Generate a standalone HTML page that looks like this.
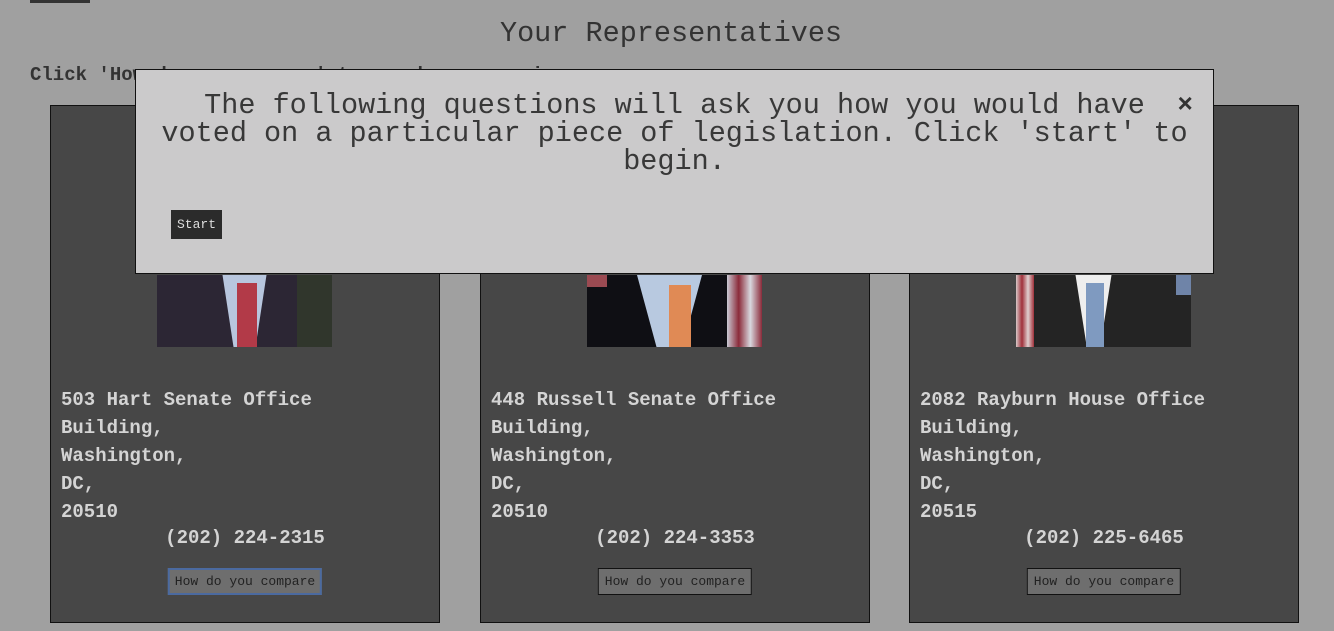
<!DOCTYPE html>
<html><head><style>
body{margin:0;width:1334px;height:631px;background:#a0a0a0;font-family:"Liberation Mono",monospace;position:relative;overflow:hidden;color:#333}
.abs{position:absolute}
.card{position:absolute;top:105px;width:388px;height:516px;background:#474747;border:1px solid #111}
.photo{position:absolute;top:169px;left:106px;width:175px;height:72px;overflow:hidden}
.addr{position:absolute;left:10px;top:280px;font-weight:bold;font-size:19px;line-height:28px;color:#d4d4d4}
.phone{position:absolute;left:0;width:100%;top:421px;text-align:center;font-weight:bold;font-size:19px;color:#d4d4d4}
.btn{position:absolute;top:462px;left:50%;transform:translateX(-50%);font-size:13px;padding:5px 6px;background:#6e6e6e;border:1px solid #111;color:#222;white-space:nowrap}
</style></head><body>
<div class="abs" style="left:30px;top:0;width:60px;height:3px;background:#333"></div>
<div class="abs" style="left:4px;width:1334px;top:17px;text-align:center;font-size:28.5px;color:#333">Your Representatives</div>
<div class="abs" style="left:30px;top:64px;font-size:19px;font-weight:bold;color:#333">Click 'How do you compare' to see how your views compare.</div>

<div class="card" style="left:50px">
<div class="photo" style="background:#2a2a2a">
<div class="abs" style="left:0;top:0;width:175px;height:72px;background:#2c2634"></div>
<div class="abs" style="left:60px;top:0;width:55px;height:72px;background:#b8c6de;clip-path:polygon(10% 0,90% 0,70% 100%,30% 100%)"></div>
<div class="abs" style="left:80px;top:8px;width:20px;height:64px;background:#b23a48"></div>
<div class="abs" style="left:140px;top:0;width:35px;height:72px;background:#30362c"></div>
</div>
<div class="addr">503 Hart Senate Office<br>Building,<br>Washington,<br>DC,<br>20510</div>
<div class="phone">(202) 224-2315</div>
<div class="btn" style="border:2px solid #4b6aa0;padding:4px 5px">How do you compare</div>
</div>

<div class="card" style="left:480px">
<div class="photo" style="background:#0f0f14">
<div class="abs" style="left:0;top:0;width:20px;height:12px;background:#9b4a52"></div>
<div class="abs" style="left:140px;top:0;width:35px;height:72px;background:linear-gradient(90deg,#c9c9d4,#8b2b3a,#d8d8df,#8b2b3a)"></div>
<div class="abs" style="left:50px;top:0;width:65px;height:72px;background:#b8c9e0;clip-path:polygon(0 0,100% 0,70% 100%,30% 100%)"></div>
<div class="abs" style="left:82px;top:10px;width:22px;height:62px;background:#e08a55"></div>
</div>
<div class="addr">448 Russell Senate Office<br>Building,<br>Washington,<br>DC,<br>20510</div>
<div class="phone">(202) 224-3353</div>
<div class="btn">How do you compare</div>
</div>

<div class="card" style="left:909px">
<div class="photo" style="background:#242424">
<div class="abs" style="left:0;top:0;width:18px;height:72px;background:linear-gradient(90deg,#d8c8c8,#a0303a,#e0d0d0,#a0303a)"></div>
<div class="abs" style="left:160px;top:0;width:15px;height:20px;background:#6f84a8"></div>
<div class="abs" style="left:55px;top:0;width:45px;height:72px;background:#eeeeee;clip-path:polygon(10% 0,90% 0,65% 100%,35% 100%)"></div>
<div class="abs" style="left:70px;top:8px;width:18px;height:64px;background:#7f9ac0"></div>
</div>
<div class="addr">2082 Rayburn House Office<br>Building,<br>Washington,<br>DC,<br>20515</div>
<div class="phone">(202) 225-6465</div>
<div class="btn">How do you compare</div>
</div>

<div class="abs" style="left:135px;top:69px;width:1077px;height:203px;background:#cbcacb;border:1px solid #111">
<div class="abs" style="left:10px;top:22px;width:1057px;text-align:center;font-size:28.5px;line-height:28px;color:#383838">&nbsp;&nbsp;The following questions will ask you how you would have&nbsp;&nbsp;<br>voted on a particular piece of legislation. Click 'start' to begin.</div>
<div class="abs" style="right:20px;top:20px;font-size:26px;font-weight:bold;color:#333">×</div>
<div class="abs" style="left:35px;top:140px;width:51px;height:29px;background:#2b2b2b;color:#ddd;font-size:13px;line-height:29px;text-align:center">Start</div>
</div>
</body></html>
